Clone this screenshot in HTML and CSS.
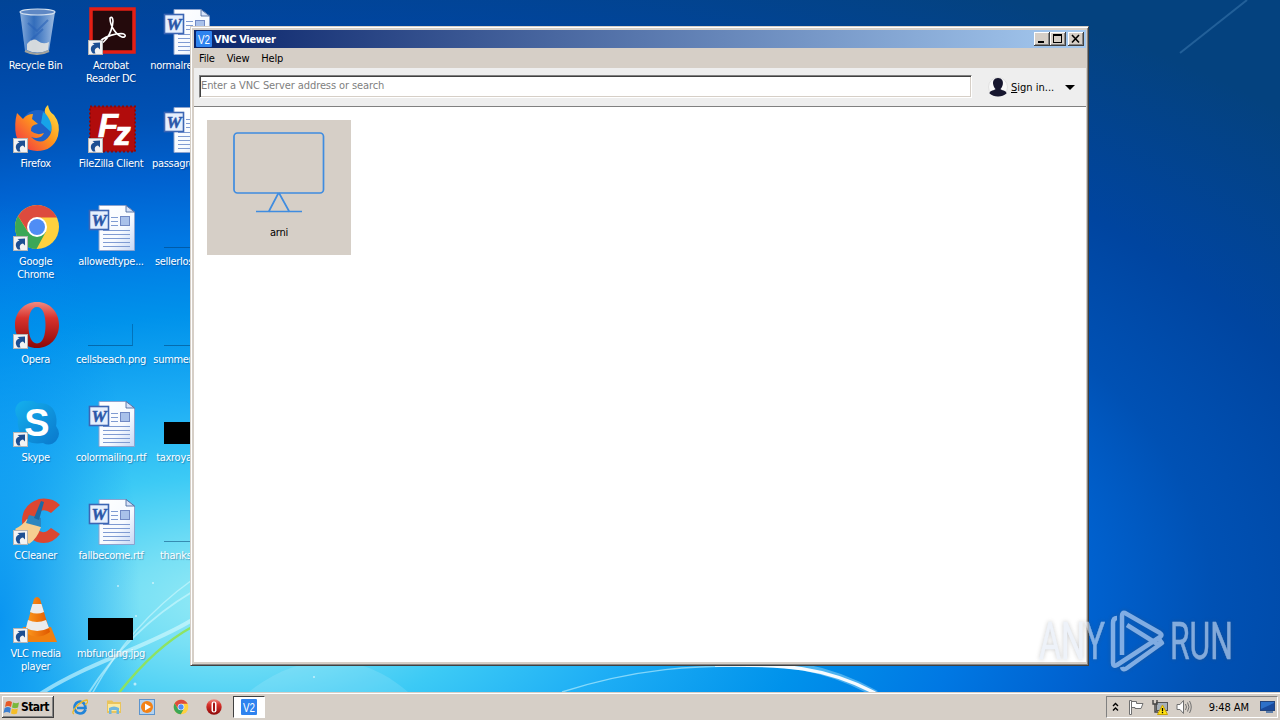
FILE: index.html
```html
<!DOCTYPE html>
<html>
  <head>
    <meta charset="utf-8">
    <title>VNC Viewer</title>
    <link rel="stylesheet" href="styles.css">
  </head>
  <body>
    <!-- shared icons -->
    <svg class="defs" width="0" height="0">
      <defs>
        <linearGradient id="paper" x1="0" y1="0" x2="1" y2="1">
          <stop offset="0" stop-color="#fff"/><stop offset=".6" stop-color="#f6faff"/><stop offset="1" stop-color="#c4d6f4"/>
        </linearGradient>
        <linearGradient id="red" x1="0" y1="0" x2="0" y2="1">
          <stop offset="0" stop-color="#f08a80"/><stop offset=".35" stop-color="#d8322c"/><stop offset="1" stop-color="#8c0808"/>
        </linearGradient>
        <linearGradient id="fox" x1="1" y1="0" x2="0" y2="1">
          <stop offset="0" stop-color="#ffe94a"/><stop offset=".45" stop-color="#ff9a1c"/><stop offset="1" stop-color="#f0264a"/>
        </linearGradient>
        <linearGradient id="glass" x1="0" y1="0" x2="1" y2="0">
          <stop offset="0" stop-color="#b8d2f2" stop-opacity=".75"/><stop offset=".4" stop-color="#5d8fd4" stop-opacity=".55"/><stop offset="1" stop-color="#c8dcf4" stop-opacity=".8"/>
        </linearGradient>
        <linearGradient id="cone" x1="0" y1="0" x2="1" y2="0">
          <stop offset="0" stop-color="#ff9c1e"/><stop offset="1" stop-color="#df5800"/>
        </linearGradient>
        <linearGradient id="sky" x1="0" y1="0" x2="1" y2="1">
          <stop offset="0" stop-color="#14b0ee"/><stop offset="1" stop-color="#0a78cc"/>
        </linearGradient>
      </defs>
      <symbol id="shortcut" viewBox="0 0 15 15">
        <rect x=".5" y=".5" width="14" height="14" fill="#f3f3f3" stroke="#b5b5b5"/>
        <path d="M5 13.500C1.500 10 2.500 5.500 6.500 4.500L4.500 3L12 2.500L12 9.500L10 7.500C7 8 6 10 7.500 13.500Z" fill="#1d4f92"/>
      </symbol>
      <symbol id="doc" viewBox="0 0 48 48">
        <path d="M11 2.500H38L46.500 9V47.500H11Z" fill="url(#paper)" stroke="#8ba3cf"/>
        <path d="M38 2.500V9H46.500Z" fill="#d6e2f8" stroke="#3d5d96" stroke-width=".8"/>
        <path d="M23 14.500H30M23 18.500H30M23 22.500H30M15 27.500H42M15 31.500H42M15 35.500H42M15 39.500H42M15 43.500H42" stroke="#7f9bd2"/>
        <rect x="32.500" y="13.500" width="9" height="9" fill="#a9c1ea" stroke="#7189c4"/>
        <rect x="1.500" y="7.500" width="19" height="19" fill="#e6effd" stroke="#3c66b4" stroke-width="1.600"/>
        <text class="w-mark" x="11" y="22.500" text-anchor="middle">W</text>
      </symbol>
      <symbol id="opera" viewBox="0 0 48 48">
        <path fill-rule="evenodd" d="M24 1C37 1 46 11 46 24S37 47 24 47S2 37 2 24S11 1 24 1ZM24 6C18 6 15.500 14 15.500 24S18 42.500 24 42.500S32.500 34 32.500 24S30 6 24 6Z" fill="url(#red)"/>
      </symbol>
      <symbol id="chrome" viewBox="0 0 48 48">
        <circle cx="24" cy="24" r="22" fill="#ffd13f"/>
        <path d="M5 13A22 22 0 0 0 23.500 46L32.700 29L15 29Z" fill="#3ba757"/>
        <path d="M15.300 29L5 13A22 22 0 0 1 44 14.500H24Z" fill="#dd4b3e"/>
        <circle cx="24" cy="24" r="10" fill="#fff"/>
        <circle cx="24" cy="24" r="8" fill="#4f8df5"/>
      </symbol>
      <symbol id="vnc" viewBox="0 0 16 16">
        <rect width="16" height="16" rx="1" fill="#2f83ef"/>
        <text class="vnc-mark" x="2" y="12.500" textLength="12" lengthAdjust="spacingAndGlyphs">V2</text>
      </symbol>
    </svg>

    <main class="desktop">
      <svg class="rays" width="1280" height="692" fill="none">
        <path class="ray soft" d="M40 694C90 662 150 646 192 620"/>
        <path class="ray" d="M88 694C116 650 150 617 192 592"/>
        <path class="ray thin" d="M92 694C120 642 156 606 192 580"/>
        <path class="ray green" d="M118 694C140 666 166 641 192 627"/>
        <path class="ray thin" d="M562 692C640 667 700 666 740 666"/>
        <path class="ray glow" d="M715 662C785 661 826 666 876 694"/>
        <path class="ray core" d="M715 665C785 664 826 667 875 693"/>
        <path d="M246 694C300 650 360 650 408 692Z" fill="#fff" opacity=".12"/>
        <path class="ray faint" d="M1180 53L1247 0"/>
        <g fill="#fff" opacity=".6"><circle cx="118" cy="586" r="1"/><circle cx="153" cy="583" r="1"/><circle cx="135" cy="684" r="1.500"/><circle cx="314" cy="677" r="1"/><circle cx="136" cy="616" r="1"/></g>
      </svg>

      <div class="icons">
        <div class="icon">
          <svg viewBox="0 0 48 48">
            <path d="M7 5L12 44Q24 50 36 44L42 5Z" fill="url(#glass)"/>
            <path d="M14 37Q20 30 25 34T36 35L35 43Q24 48 14 43Z" fill="#e6e4e0" opacity=".9"/>
            <path d="M12 44Q24 50 36 44" fill="none" stroke="#a2a29c" stroke-width="2"/>
            <ellipse cx="24.500" cy="5" rx="17.500" ry="3" fill="#5f88c4" stroke="#d5e2f0" stroke-width="1.200"/>
            <path d="M15 16L24 24L35 13M18 33L30 22" stroke="#2a62b8" stroke-width="2" opacity=".6" fill="none"/>
          </svg>
          <span>Recycle Bin</span>
        </div>
        <div class="icon">
          <svg viewBox="0 0 48 48">
            <rect x="3" y="2" width="43" height="43" fill="#240a0c" stroke="#e41f14" stroke-width="3.500"/>
            <path d="M22 11C24 9 26 12 24.500 18C23 25 19 32 15.500 35C13 37 11 35 14 32.500C18 29.500 27 26.500 33 26.500C39 27 38 31 34 30C29 28.500 22 20 22 11Z" fill="none" stroke="#fff" stroke-width="1.600"/>
          </svg>
          <svg class="arrow"><use href="#shortcut"/></svg>
          <span>Acrobat<br>Reader DC</span>
        </div>
        <div class="icon"><svg><use href="#doc"/></svg><span>normalreads.rtf</span></div>

        <div class="icon">
          <svg viewBox="0 0 48 48">
            <circle cx="25" cy="22" r="17" fill="#1d62c8"/>
            <path d="M30 7Q42 14 38 27L28 18Z" fill="#17a3e8"/>
            <path d="M4 8L10 14Q14 9 20 9L19 14L25 19Q17 20 18 26Q24 31 31 28Q28 35 18 32Q29 42 37 30Q42 20 32 8Q31 3 35 0Q36 7 41 10Q48 19 45 31Q40 46 24 46Q7 45 3 30Q1 19 4 8Z" fill="url(#fox)"/>
          </svg>
          <svg class="arrow"><use href="#shortcut"/></svg>
          <span>Firefox</span>
        </div>
        <div class="icon">
          <svg viewBox="0 0 48 48">
            <rect x="2" y="1.500" width="45" height="45" fill="#b10c0c" stroke="#8e0808" stroke-width="2" stroke-dasharray="2 2"/>
            <text class="fz-mark" x="10" y="32">F<tspan dx="-4" dy="8">z</tspan></text>
          </svg>
          <svg class="arrow"><use href="#shortcut"/></svg>
          <span>FileZilla Client</span>
        </div>
        <div class="icon"><svg><use href="#doc"/></svg><span>passagrows.rtf</span></div>

        <div class="icon">
          <svg><use href="#chrome"/></svg>
          <svg class="arrow"><use href="#shortcut"/></svg>
          <span>Google<br>Chrome</span>
        </div>
        <div class="icon"><svg><use href="#doc"/></svg><span>allowedtype...</span></div>
        <div class="icon"><div class="thumb clear"></div><span>sellerlost.png</span></div>

        <div class="icon">
          <svg><use href="#opera"/></svg>
          <svg class="arrow"><use href="#shortcut"/></svg>
          <span>Opera</span>
        </div>
        <div class="icon"><div class="thumb clear corner"></div><span>cellsbeach.png</span></div>
        <div class="icon"><div class="thumb clear"></div><span>summerit.png</span></div>

        <div class="icon">
          <svg viewBox="0 0 48 48">
            <path d="M14 2Q20 1 24 4Q40 3 43 17Q44 22 43 27Q49 35 43 42Q37 48 30 44Q12 47 6 31Q4 24 5 20Q0 12 4 6Q8 1 14 2Z" fill="url(#sky)"/>
            <text class="skype-mark" x="24" y="37" text-anchor="middle">S</text>
          </svg>
          <svg class="arrow"><use href="#shortcut"/></svg>
          <span>Skype</span>
        </div>
        <div class="icon"><svg><use href="#doc"/></svg><span>colormailing.rtf</span></div>
        <div class="icon"><div class="thumb black"></div><span>taxroyals.jpg</span></div>

        <div class="icon">
          <svg viewBox="0 0 48 48">
            <path d="M47 8L38 16Q30 10 24 17Q18 24 24 32Q30 39 38 31L47 37Q38 49 24 45Q9 39 9 23Q10 7 26 2Q39 0 47 8Z" fill="#dc4630"/>
            <path d="M14 22L28 30Q24 42 16 47L2 32Q10 28 14 22Z" fill="#f6cf91"/>
            <path d="M16 18L28 21L28 30L13 26Z" fill="#2d86bf"/>
            <path d="M21 21L28 4L31 5L26 23Z" fill="#1b6aa4"/>
          </svg>
          <svg class="arrow"><use href="#shortcut"/></svg>
          <span>CCleaner</span>
        </div>
        <div class="icon"><svg><use href="#doc"/></svg><span>fallbecome.rtf</span></div>
        <div class="icon"><div class="thumb clear"></div><span>thanks.png</span></div>

        <div class="icon">
          <svg viewBox="0 0 48 48">
            <path d="M10 32H38L44 47H7Z" fill="#f08010"/>
            <path d="M21 4Q24 0 27 4L37 37Q24 46 12 37Z" fill="url(#cone)"/>
            <path d="M19.500 9H28.500L31 17Q24 20 17 17ZM15 25Q24 29 33 25L36 33Q24 39 13 33Z" fill="#ececec"/>
          </svg>
          <svg class="arrow"><use href="#shortcut"/></svg>
          <span>VLC media<br>player</span>
        </div>
        <div class="icon"><div class="thumb black"></div><span>mbfunding.jpg</span></div>
      </div>

      <section class="window">
        <header class="titlebar">
          <svg width="16" height="16"><use href="#vnc"/></svg>
          <h1>VNC Viewer</h1>
          <button class="win-btn"><svg viewBox="0 0 16 14"><path d="M4 9h6v2h-6z"/></svg></button>
          <button class="win-btn"><svg viewBox="0 0 16 14"><path fill-rule="evenodd" d="M3 2h9v9h-9zM4 4v6h7v-6z"/></svg></button>
          <button class="win-btn close"><svg viewBox="0 0 16 14"><path d="M4 3L11 10.500M11 3L4 10.500" stroke="#000" stroke-width="1.600"/></svg></button>
        </header>
        <nav class="menubar"><span>File</span><span>View</span><span>Help</span></nav>
        <div class="toolbar">
          <input class="address" type="text" placeholder="Enter a VNC Server address or search">
          <div class="signin">
            <svg width="20" height="20" viewBox="0 0 20 20">
              <circle cx="10" cy="10" r="9.500" fill="#f8f8f8" stroke="#e0e0e0"/>
              <path d="M10 1C14 1 15.500 4 14.800 7.500C14.300 10 13.500 11 12.500 12C13 13.500 18.500 13 18.500 16.500Q15 19.500 10 19.500T1.500 16.500C1.500 13 7 13.500 7.500 12C6.500 11 5.700 10 5.200 7.500C4.500 4 6 1 10 1Z" fill="#16162e"/>
            </svg>
            <span><u>S</u>ign in...</span>
            <i class="caret"></i>
          </div>
        </div>
        <div class="content">
          <div class="server">
            <svg width="92" height="82" viewBox="0 0 92 82" fill="none" stroke="#3f8ce0" stroke-width="1.700">
              <rect x="1" y="1" width="89.500" height="60" rx="3.500"/>
              <path d="M45.500 61L35.500 80M46 61L56.500 80M23 79.500H69"/>
            </svg>
            <span>arni</span>
          </div>
        </div>
      </section>

      <svg class="watermark" width="200" height="70" viewBox="0 0 200 70">
        <text x="3" y="51" textLength="66" lengthAdjust="spacingAndGlyphs">ANY</text>
        <text x="134" y="51" textLength="63" lengthAdjust="spacingAndGlyphs">RUN</text>
        <g fill="none" stroke="#dce8fa" stroke-width="4.500" stroke-linejoin="round">
          <path d="M81 10Q77 10 77 15V55Q77 59 81 57L124 29Q127 27 124 25L89 5Q86 4 86 8V47"/>
          <path d="M91 17L123 37M123 31L126 35L91 60Q87 63 86 59"/>
        </g>
      </svg>
    </main>

    <footer class="taskbar">
      <button class="start">
        <svg width="17" height="16" viewBox="0 0 17 16">
          <path d="M3 3Q6 1 9 3L8 8Q5 6 2 8Z" fill="#e65a28"/>
          <path d="M10 3.500Q13 5 16 3.500L15 8.500Q12 10 9 8.500Z" fill="#79b83a"/>
          <path d="M1.700 9Q5 7 7.800 9L7 14Q4 12 .5 14Z" fill="#3c7fd0"/>
          <path d="M8.800 9.500Q12 11 14.800 9.500L14 14.500Q11 16 8 14.500Z" fill="#f5bd27"/>
        </svg>
        Start
      </button>
      <div class="quick">
        <svg viewBox="0 0 16 16"><path d="M13.500 10.500Q12 14.500 8 14.500Q3 14 2.500 8.500Q3 3 8 2.500Q13 3 13.500 9H5" fill="none" stroke="#2284d8" stroke-width="2.700"/><path d="M2 15Q-1 14 4 8T15 1Q17 3 13 6" fill="none" stroke="#eaba29" stroke-width="1.300"/></svg>
        <svg viewBox="0 0 16 16"><path d="M1 3V1.500H6L7.500 3H15V14H1Z" fill="#e9c45c"/><path d="M2 5H14V12H2Z" fill="#fbeaa2"/><path d="M3 15V9Q8 6 13 9V15H10.500V11H5.500V15Z" fill="#70b7de"/></svg>
        <svg viewBox="0 0 16 16"><rect x=".5" y=".5" width="15" height="15" fill="#b3d2ef" stroke="#5c94cd"/><circle cx="8" cy="8" r="6" fill="#f38216"/><path d="M6 4.500L12 8L6 11.500Z" fill="#fff"/></svg>
        <svg><use href="#chrome"/></svg>
        <svg viewBox="0 0 16 16"><circle cx="8" cy="8" r="7.700" fill="url(#red)"/><rect x="5.500" y="2.500" width="5" height="11" rx="2.200" fill="#fff"/><rect x="7" y="3.500" width="2" height="9" rx="1" fill="#a51212"/></svg>
      </div>
      <div class="task"><svg width="16" height="16"><use href="#vnc"/></svg></div>
      <div class="tray">
        <svg width="7" height="10" viewBox="0 0 7 10" fill="none" stroke="#000" stroke-width="1.400"><path d="M1 4L3.500 1.500L6 4M1 8.500L3.500 6L6 8.500"/></svg>
        <svg class="flag" width="16" height="16" viewBox="0 0 16 16"><path d="M1.500 1.500H3.500V15.500H1.500ZM3.500 2.500H8.500V4.500H15L13 9.500H7V8.500H3.500Z" fill="#fff" stroke="#707070"/></svg>
        <svg class="net" width="16" height="16" viewBox="0 0 16 16"><rect x="4.500" y="3.500" width="11" height="8" fill="#a7b0b8" stroke="#555"/><path d="M1 1V5H5V1M3 5V13H6" fill="none" stroke="#444" stroke-width="1.400"/><path d="M10.500 6L15.500 15.500H5.500Z" fill="#ffe312" stroke="#c9a100"/><path d="M10.500 9V12.300M10.500 13V14.300" stroke="#000" stroke-width="1.300"/></svg>
        <svg class="volume" width="16" height="16" viewBox="0 0 16 16" fill="none" stroke="#707070"><path d="M1 5.500H4L7.500 1.500V14.500L4 10.500H1Z" fill="#fff"/><path d="M9.500 5Q11.500 8 9.500 11M11.500 3.500Q14.500 8 11.500 12.500M13.500 2Q17 8 13.500 14"/></svg>
        <time>9:48 AM</time>
        <svg width="15" height="12" viewBox="0 0 15 12"><rect x=".5" y=".5" width="14" height="9" fill="#2d70c8" stroke="#24457c"/><path d="M1 8L14 2V9H1Z" fill="#194a9c"/><path d="M6 11H13" stroke="#5d7eaa" stroke-width="2"/></svg>
      </div>
    </footer>
  </body>
</html>
```

FILE: styles.css
```css
html, body {
  height: 100%;
  margin: 0;
  padding: 0;
  overflow: hidden;
}
body {
  display: flex;
  flex-direction: column;
  font-family: "DejaVu Sans Condensed", "DejaVu Sans", sans-serif;
  font-stretch: condensed;
  font-size: 11px;
  letter-spacing: -0.3px;
  color: #000;
}
.defs {
  position: absolute;
}
.desktop {
  position: relative;
  flex: 1;
  overflow: hidden;
  background:
    radial-gradient(ellipse 140px 420px at 0 620px, rgba(0, 140, 240, .85), rgba(0, 140, 240, 0)),
    radial-gradient(ellipse 1260px 620px at 230px 600px,
      #96ebf5 0%, #78e0f5 8%, #3ccaf5 20%, #1eaef5 32%, #0092eb 46%,
      #0078e3 58%, #0062d0 68%, #0051b4 78%, #0045a0 92%, #04427f 115%);
}
.rays {
  position: absolute;
  left: 0;
  top: 0;
}
.ray {
  stroke: #d8fbff;
  stroke-width: 2;
  opacity: .55;
}
.ray.soft {
  stroke-width: 4;
  opacity: .6;
}
.ray.thin {
  stroke-width: 1.5;
}
.ray.green {
  stroke: #8fe35a;
  stroke-width: 2.5;
  opacity: .95;
}
.ray.glow {
  stroke-width: 7;
  opacity: .35;
}
.ray.core {
  stroke: #fff;
  stroke-width: 3.5;
  opacity: .95;
}
.ray.faint {
  stroke: #6ba4d8;
  opacity: .3;
}

/* desktop icons */
.icons {
  display: grid;
  grid-template-columns: repeat(3, 75.300px);
  grid-auto-rows: 98px;
  margin-left: -2px;
}
.icon {
  position: relative;
  display: flex;
  flex-direction: column;
  align-items: center;
  padding-top: 7px;
  color: #fff;
  text-align: center;
}
.icon > svg:first-child {
  width: 48px;
  height: 48px;
  margin-left: 2px;
}
.icon .arrow {
  position: absolute;
  left: 15px;
  top: 40px;
  width: 15px;
  height: 15px;
}
.icon span {
  margin-top: 4px;
  line-height: 13px;
  white-space: nowrap;
  text-shadow: 1px 1px 1px rgba(0, 30, 80, .35);
}
.thumb {
  width: 45px;
  height: 22px;
  margin: 23px 0 3px;
  box-sizing: border-box;
}
.thumb.clear {
  border-bottom: 1px solid rgba(0, 60, 110, .5);
}
.thumb.corner {
  border-right: 1px solid rgba(0, 60, 110, .4);
}
.thumb.black {
  background: #000;
}
.w-mark {
  font: italic bold 17px "Liberation Serif", serif;
  letter-spacing: 0;
  fill: #2b57a8;
  stroke: #2b57a8;
  stroke-width: .5px;
}
.fz-mark {
  font: italic bold 33px "Liberation Sans", sans-serif;
  letter-spacing: 0;
  fill: #fff;
  stroke: #fff;
  stroke-width: .7px;
}
.skype-mark {
  font: bold 38px "Liberation Sans", sans-serif;
  letter-spacing: 0;
  fill: #fff;
}
.vnc-mark {
  font: 12px "Liberation Sans", sans-serif;
  letter-spacing: 0;
  fill: #fff;
}

/* viewer window */
.window {
  position: absolute;
  left: 190px;
  top: 26px;
  width: 899px;
  height: 640px;
  box-sizing: border-box;
  display: flex;
  flex-direction: column;
  padding: 2px;
  background: #d6cfc7;
  border: 1px solid;
  border-color: #d6cfc7 #404040 #404040 #d6cfc7;
  box-shadow: inset 1px 1px #fff, inset -1px -1px #858585;
}
.titlebar {
  display: flex;
  align-items: center;
  flex: none;
  height: 18px;
  margin: 1px 0 0 1px;
  padding: 0 2px;
  background: linear-gradient(90deg, #0a246a, #a6caf0);
}
.titlebar h1 {
  flex: 1;
  margin: 0 0 0 2px;
  font-size: 11px;
  letter-spacing: -.35px;
  color: #fff;
}
.win-btn {
  width: 16px;
  height: 14px;
  padding: 0;
  border: 0;
  background: #d6cfc7;
  box-shadow: inset -1px -1px #404040, inset 1px 1px #fff, inset -2px -2px #858585;
}
.win-btn.close {
  margin-left: 2px;
}
.win-btn svg {
  display: block;
}
.menubar {
  display: flex;
  flex: none;
  gap: 12px;
  height: 20px;
  padding-left: 6px;
  line-height: 21px;
  letter-spacing: -.2px;
}
.toolbar {
  display: flex;
  flex: none;
  height: 38px;
  margin-left: 1px;
  padding: 7px 11px 9px 5px;
  box-sizing: border-box;
  background: #eee;
}
.address {
  width: 773px;
  height: 23px;
  box-sizing: border-box;
  padding: 0 0 3px 1px;
  border: 1px solid;
  border-color: #808080 #fff #fff #808080;
  box-shadow: inset 1px 1px #404040, inset -1px -1px #d6cfc7;
  background: #fff;
  font: inherit;
  letter-spacing: -.1px;
}
.address::placeholder {
  color: #808080;
}
.signin {
  display: flex;
  align-items: center;
  flex: 1;
  height: 24px;
  margin-left: 16px;
}
.signin span {
  margin-left: 3px;
  letter-spacing: 0;
}
.caret {
  margin-left: auto;
  border: 5px solid transparent;
  border-top-color: #000;
  border-bottom: 0;
}
.content {
  flex: 1;
  margin: 0 0 1px 1px;
  border-top: 1px solid #808080;
  background: #fff;
}
.server {
  display: flex;
  flex-direction: column;
  align-items: center;
  width: 144px;
  height: 135px;
  margin: 13px;
  padding-top: 12px;
  box-sizing: border-box;
  background: #d6cfc7;
}
.server span {
  margin-top: 12px;
}
.watermark {
  position: absolute;
  left: 1036px;
  top: 608px;
  opacity: .58;
  filter: drop-shadow(0 0 2px rgba(80, 80, 80, .5));
}
.watermark text {
  font: 400 51px "Roboto", sans-serif;
  letter-spacing: 0;
  fill: #e2eaf6;
  stroke: #e2eaf6;
  stroke-width: .5px;
}

/* taskbar */
.taskbar {
  display: flex;
  align-items: center;
  flex: none;
  height: 28px;
  box-sizing: border-box;
  padding: 1px 2px 0;
  border-top: 1px solid #d6cfc7;
  box-shadow: inset 0 1px #fff;
  background: #d6cfc7;
}
.start {
  display: flex;
  align-items: center;
  gap: 1px;
  width: 52px;
  height: 22px;
  padding: 0 1px;
  border: 0;
  background: #d6cfc7;
  box-shadow: inset -1px -1px #404040, inset 1px 1px #fff, inset -2px -2px #858585;
  font: inherit;
  font-size: 12px;
  font-weight: bold;
  letter-spacing: -.6px;
}
.quick {
  display: flex;
  gap: 17.500px;
  margin-left: 18px;
}
.quick svg {
  width: 16px;
  height: 16px;
}
.task {
  display: flex;
  align-items: center;
  justify-content: center;
  width: 32px;
  height: 22px;
  margin-left: 11px;
  box-sizing: border-box;
  background: #fff;
  border: 1px solid;
  border-color: #404040 #fff #fff #404040;
}
.tray {
  display: flex;
  align-items: center;
  height: 22px;
  margin-left: auto;
  padding: 0 2px 0 5px;
  box-sizing: border-box;
  border: 1px solid;
  border-color: #808080 #fff #fff #808080;
}
.tray .flag {
  margin-left: 9px;
}
.tray .net,
.tray .volume {
  margin-left: 8px;
}
.tray time {
  margin: 0 11px 0 17px;
  letter-spacing: -.05px;
}
```
